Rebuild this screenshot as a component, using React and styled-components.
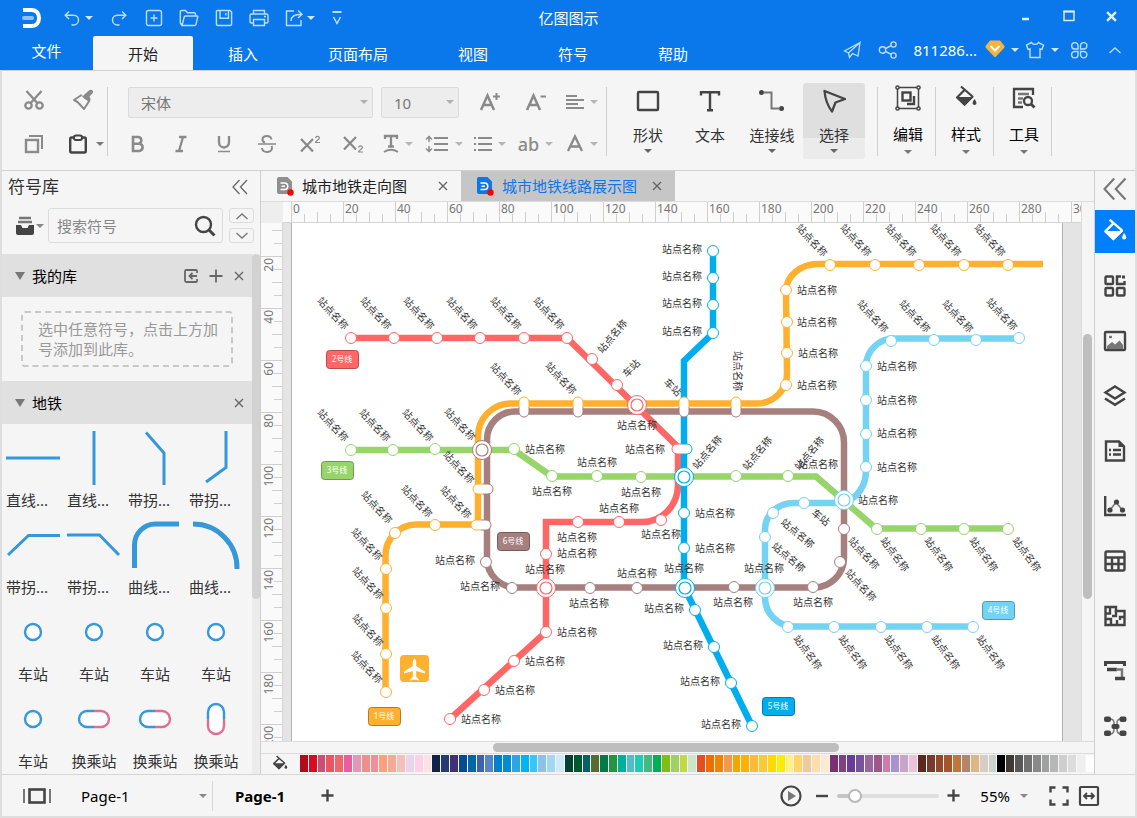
import React, { useState } from "react";
import styled, { createGlobalStyle, css } from "styled-components";

const GlobalStyle = createGlobalStyle`
  * {
    box-sizing: border-box;
  }
  body {
    margin: 0;
    font-family: "Noto Sans", "Noto Sans CJK SC", sans-serif;
    font-size: 15px;
    line-height: 20px;
    color: #333;
    background: #f5f5f5;
  }
  button,
  input,
  select {
    font: inherit;
    color: inherit;
    margin: 0;
    padding: 0;
    border: 0;
    background: none;
    outline: none;
  }
`;

/* ---------- data ---------- */

const menuTabs = ["开始", "插入", "页面布局", "视图", "符号", "帮助"];

const palette = (
  "b60a1a d90b22 ca4f77 ea5465 ec686e e85f9f e299b7 ef8f8b f08f9b ffa07a f1ab96 f6bfbc e9d5e9 ffd1e6 ffe0e5 " +
  "11214d 233b72 412f78 044b91 0067a6 3e62ad 5686c4 007fcd 008dd0 2ca5e2 00b4f0 33c8fb 8cc2ea a0d8ef cdeaf7 " +
  "004233 00592e 006463 576c31 007b47 1f963f 00af9d 52bec3 1bcdb4 47b980 00b054 7fbd11 a2cf63 c0d945 cde6c9 " +
  "e34f21 ed6d00 f08300 f2994f f2a600 ffb100 ffb937 fcca2f ffd900 ffec00 fff280 ffd56b eccd9a ffddb0 ffe9d0 " +
  "7a3173 833f85 673d98 75549b 9a669f 9d5788 cd7cb0 aa92d1 c8a5c8 edc1dc " +
  "5b2a1d 763a2e 94492a a85429 c1763e b68469 dfb583 d8ccc5 c9d3cb " +
  "000000 3e3837 595757 727171 898989 9fa0a0 b5b6b6 cdcecd dcdcdc efefef ffffff"
).split(" ");

const RED = "#ff6666";
const ORANGE = "#ffb02f";
const BROWN = "#a67f7f";
const GREEN = "#97d56a";
const BLUE = "#00aeef";
const SKY = "#74d3f3";

const metroLines = [
  { color: ORANGE, d: "M385.5 692V556A31 31 0 0 1 416 524.5H478V437A33 33 0 0 1 511 403.5H757A30 30 0 0 0 787 373L786 291A32 27 0 0 1 818 264H1043" },
  { color: BROWN, d: "M487 440A28 28 0 0 1 515 411.5H813A31 31 0 0 1 844 443V558A30 30 0 0 1 814 587.5H516A29 29 0 0 1 487 558Z" },
  { color: GREEN, d: "M350 450H514L552 476.5H816L876 528.5H1008" },
  { color: SKY, d: "M1019 338.5H894A28 28 0 0 0 866 366V470C866 486 858 497 844 503H794A29 26 0 0 0 765 529V598A29 29 0 0 0 794 626.5H972" },
  { color: RED, d: "M350 338H567L678 447V485A36 37 0 0 1 642 522H546V632L450 719" },
  { color: BLUE, d: "M713 250V333L684 361V587L752 726" },
];

const stations = [
  [RED, [[351, 338], [394, 338], [437, 338], [480, 338], [524, 338], [567, 338], [592, 359], [617, 385], [578, 522], [619, 522], [661, 520], [546, 554], [546, 632], [514, 661], [484, 690], [450, 719]]],
  [ORANGE, [[386, 692], [386, 654], [386, 608], [386, 569], [395, 533], [435, 525], [786, 385], [787, 353], [787, 322], [786, 290], [830, 265], [875, 265], [919, 265], [964, 265], [1008, 265]]],
  [BROWN, [[486, 562], [512, 588], [590, 588], [637, 588], [734, 587], [813, 587], [840, 562], [844, 529]]],
  [GREEN, [[351, 450], [393, 450], [435, 449], [514, 449], [552, 476], [597, 476], [641, 477], [736, 476], [788, 476], [877, 529], [921, 529], [964, 529], [1008, 529]]],
  [BLUE, [[713, 251], [713, 278], [713, 305], [713, 333], [684, 513], [684, 548], [695, 610], [714, 647], [731, 683], [752, 726]]],
  [SKY, [[891, 341], [934, 340], [976, 340], [1019, 338], [866, 366], [866, 400], [866, 434], [866, 467], [804, 503], [773, 513], [765, 537], [788, 627], [834, 627], [881, 627], [927, 627], [973, 627]]],
];

const interchanges = [
  [RED, 637, 405],
  [RED, 546, 588],
  [BROWN, 482, 450],
  [BLUE, 684, 477],
  [BLUE, 685, 588],
  [SKY, 844, 500],
  [SKY, 765, 588],
];

const capsules = [
  [524, 407, ORANGE, BROWN, true],
  [578, 407, ORANGE, BROWN, true],
  [684, 407, ORANGE, BROWN, true],
  [736, 407, ORANGE, BROWN, true],
  [483, 489, ORANGE, BROWN, false],
  [481, 525, ORANGE, BROWN, false],
  [682, 449, RED, BLUE, false],
];

// angle -> centres of the station names
const stationNames = [
  [0, [
    [682, 249], [682, 276], [682, 303], [682, 331], [817, 290], [817, 322], [818, 353], [817, 385],
    [637, 425], [645, 449], [597, 462], [818, 464], [897, 366], [897, 400], [897, 433], [897, 467],
    [878, 500], [545, 449], [552, 491], [455, 560], [480, 586], [577, 537], [577, 553], [545, 569],
    [577, 632], [545, 661], [515, 690], [481, 719], [641, 492], [619, 508], [661, 534], [637, 573],
    [684, 568], [764, 568], [589, 603], [733, 602], [813, 602], [664, 608], [683, 645], [700, 681],
    [721, 724], [715, 513], [715, 548],
  ]],
  [47, [
    [333, 313], [376, 313], [419, 313], [462, 313], [506, 313], [549, 313],
    [333, 425], [375, 425], [418, 425], [460, 424], [506, 379], [561, 378],
    [459, 467], [377, 507], [417, 501], [456, 502], [367, 544], [368, 583], [368, 630], [367, 667],
    [812, 240], [856, 240], [901, 240], [946, 240], [990, 240],
    [873, 316], [915, 316], [958, 316], [1002, 314], [864, 553], [861, 585],
  ]],
  [40, [[798, 533], [789, 557]]],
  [53, [[895, 554], [939, 554], [984, 554], [1027, 554], [808, 652], [853, 652], [899, 652], [946, 652], [991, 652]]],
  [-50, [[612, 336], [707, 452], [757, 453], [809, 453]]],
  [90, [[738, 371]]],
];

const shortNames = [[673, 387, 45], [631, 368, -45], [821, 517, 40]];

const badges = [
  ["2号线", 326, 350, RED, "#b94c4c"],
  ["3号线", 321, 461, GREEN, "#6d9b4c"],
  ["1号线", 368, 707, ORANGE, "#b57c20"],
  ["6号线", 497, 532, BROWN, "#785a5a"],
  ["5号线", 762, 697, BLUE, "#007dac"],
  ["4号线", 982, 601, SKY, "#5298b0"],
];

/* ---------- icons ---------- */

const Svg = styled.svg`
  display: block;
  flex: none;
  fill: none;
  stroke: currentColor;
  stroke-width: ${(p) => p.$line || 2};
  overflow: visible;
`;

const Icon = ({ w = 20, h = 20, line, children }) => (
  <Svg width={w} height={h} viewBox={`0 0 ${w} ${h}`} $line={line} aria-hidden="true">
    {children}
  </Svg>
);

const Solid = (props) => <path fill="currentColor" stroke="none" {...props} />;

const Logo = () => (
  <Icon w={20} h={20} line={4}>
    <path d="M1 2H9.5C14.5 2 17 5.5 17 10S14.5 18 9.5 18H1" stroke="#fff" />
    <path d="M2 10H10" stroke="#8fc3f8" strokeLinecap="round" />
  </Icon>
);

const UndoIcon = () => (
  <Icon w={16} h={16} line={1.4}>
    <path d="M5 1.5L1.2 5.2L5 9M1.5 5.2H9.5C12.5 5.2 14.5 7.3 14.5 10S12.5 15 9.5 15H7.5" />
  </Icon>
);
const RedoIcon = () => (
  <Icon w={16} h={16} line={1.4}>
    <path d="M11 1.5L14.8 5.2L11 9M14.5 5.2H6.5C3.5 5.2 1.5 7.3 1.5 10S3.5 15 6.5 15H8.5" />
  </Icon>
);
const NewIcon = () => (
  <Icon w={18} h={18} line={1.4}>
    <rect x="1.5" y="1.5" width="15" height="15" rx="2" />
    <path d="M9 5.5V12.5M5.5 9H12.5" />
  </Icon>
);
const OpenIcon = () => (
  <Icon w={20} h={18} line={1.4}>
    <path d="M3 16.5L1.3 14V2.5Q1.3 1.5 2.5 1.5H6.5L8.5 3.8H15Q16.5 3.8 16.5 5V7M3 16.5L5.2 8Q5.5 7 6.5 7H18Q19 7 18.7 8L17 15.3Q16.7 16.5 15.5 16.5Z" />
  </Icon>
);
const SaveIcon = () => (
  <Icon w={18} h={18} line={1.4}>
    <path d="M2.5 1.5H15L16.6 3V15Q16.6 16.5 15 16.5H3Q1.4 16.5 1.4 15V2.5Q1.4 1.5 2.5 1.5ZM5 1.5V9.3H13.5V1.5M10.8 4V6.5" />
  </Icon>
);
const PrintIcon = () => (
  <Icon w={20} h={18} line={1.4}>
    <path d="M4.5 5V1.5H15.5V5M4.5 14H2.5Q1 14 1 12.5V6.5Q1 5 2.5 5H17.5Q19 5 19 6.5V12.5Q19 14 17.5 14H15.5M4.5 10.5H15.5V16.5H4.5ZM15 7.5H17" />
  </Icon>
);
const ExportIcon = () => (
  <Icon w={18} h={18} line={1.4}>
    <path d="M9 2H1.5V16.5H16V11M6 12C6 7.5 9 5.3 16.5 5.3M13 1.5L17 5.3L13 9" />
  </Icon>
);
const CustomIcon = () => (
  <Icon w={12} h={16} line={1.5}>
    <path d="M1.500 2H10.5" strokeWidth="2" />
    <path d="M2.5 7L6 13.5L9.5 7" />
  </Icon>
);
const SendIcon = () => (
  <Icon w={18} h={18} line={1.3}>
    <path d="M17 1.5L1.5 10L5.5 12L17 1.5L15 15L9.5 12.5L6.5 16.5L5.5 12" />
  </Icon>
);
const ShareIcon = () => (
  <Icon w={20} h={20} line={1.4}>
    <circle cx="4.5" cy="10" r="3.2" />
    <circle cx="15.5" cy="4.5" r="2.6" />
    <circle cx="15.5" cy="15.5" r="2.6" />
    <path d="M7.5 8.5L13.2 5.7M7.5 11.5L13.2 14.3" />
  </Icon>
);
const VipIcon = () => (
  <Icon w={20} h={20} line={2}>
    <path d="M5 .5H15L19.5 6Q20 7 19 8L10.8 16.8Q10 17.5 9.2 16.8L1 8Q0 7 .5 6Z" fill="#f5b340" stroke="none" />
    <path d="M5.5 6L10 10.5L14.5 6" stroke="#fff" />
  </Icon>
);
const ShirtIcon = () => (
  <Icon w={20} h={18} line={1.4}>
    <path d="M6.5 1.5L1.5 4L3 8.5L5 8V16.5H15V8L17 8.5L18.5 4L13.5 1.5C12.5 4 7.5 4 6.5 1.5Z" />
  </Icon>
);
const CloverIcon = () => (
  <Icon w={18} h={18} line={1.4}>
    <path d="M8 8H4.500A3.200 3.200 0 1 1 8 4.500ZM10.500 8H13.500A3.200 3.200 0 1 0 10.500 4.500ZM8 10.500H4.500A3.200 3.200 0 1 0 8 13.500ZM10.500 10.500H13.500A3.200 3.200 0 1 1 10.500 13.500Z" />
  </Icon>
);

const CutIcon = () => (
  <Icon w={20} h={20} line={2.3}>
    <circle cx="4.5" cy="15.5" r="3.2" />
    <circle cx="15.5" cy="15.5" r="3.2" />
    <path d="M2.5 1L13.3 13M17.5 1L6.7 13" />
  </Icon>
);
const BrushIcon = () => (
  <Icon w={22} h={22}>
    <Solid d="M8.5 5L11 7L13.5 4.5L17.5 1Q19.5 0 21 2Q21.5 3.5 20 5L17.5 7.5L18.5 10L18 12.5Q12.5 11.5 8.5 5Z" />
    <path d="M9.5 6L2 11Q6 13 7 14.5L12 20L17.5 11.5" strokeLinejoin="round" />
  </Icon>
);
const CopyIcon = () => (
  <Icon w={20} h={20}>
    <rect x="2" y="6" width="12" height="12" strokeWidth="2.400" />
    <path d="M5 2H18V15" />
  </Icon>
);
const PasteIcon = () => (
  <Icon w={20} h={20} line={2.4}>
    <path d="M6 3.5H3.5Q2.2 3.5 2.2 5V17Q2.2 18.5 3.5 18.5H16.5Q17.8 18.5 17.8 17V5Q17.8 3.5 16.5 3.5H14" />
    <rect x="6" y="1.500" width="8" height="4.500" rx="2" strokeWidth="2" />
  </Icon>
);
const BoldIcon = () => (
  <Icon w={16} h={18} line={2.6}>
    <path d="M3 2H8.5A3.4 3.4 0 0 1 8.5 8.7H3ZM3 8.7H9.5A3.7 3.7 0 0 1 9.5 16H3Z" />
  </Icon>
);
const ItalicIcon = () => (
  <Icon w={14} h={18}>
    <path d="M5 2H12.5M1.5 16H9M9 2L5 16" strokeWidth="2.3" />
  </Icon>
);
const UnderlineIcon = () => (
  <Icon w={16} h={18}>
    <path d="M3 1V7.5A5 5 0 0 0 13 7.5V1" strokeWidth="2.3" />
    <path d="M2 16.5H14" strokeWidth="1.5" />
  </Icon>
);
const StrikeIcon = () => (
  <Icon w={20} h={20}>
    <path d="M14.5 5.5C14 3 12.5 2 10 2S5.5 3.2 5.5 5.5C5.5 7 6.2 8 8 8.5M14.5 12Q15 13 15 14C15 16.5 12.5 18 10 18S5.3 16.5 5 14" />
    <path d="M1 10H19" strokeWidth="1.5" />
  </Icon>
);
const SuperIcon = () => (
  <Icon w={22} h={18}>
    <path d="M2 4L14 16.5M14 4L2 16.5" strokeWidth="2.3" />
    <path d="M16.5 3A2 2 0 0 1 20.4 3C20.4 4.5 16.5 6 16.5 7.5H21" strokeWidth="1.2" />
  </Icon>
);
const SubIcon = () => (
  <Icon w={22} h={18}>
    <path d="M2 2L14 14.5M14 2L2 14.5" strokeWidth="2.3" />
    <path d="M16.5 12.5A2 2 0 0 1 20.4 12.5C20.4 14 16.5 15.5 16.5 17H21" strokeWidth="1.2" />
  </Icon>
);
const GrowIcon = () => (
  <Icon w={22} h={20} line={2.5}>
    <path d="M2 18L8.5 3.5L15 18M4.5 13H12.5" />
    <path d="M17.5 1V8M14 4.5H21" strokeWidth="2" />
  </Icon>
);
const ShrinkIcon = () => (
  <Icon w={22} h={20} line={2.5}>
    <path d="M2 18L8.5 3.5L15 18M4.5 13H12.5" />
    <path d="M15.5 4.5H21" strokeWidth="2" />
  </Icon>
);
const AlignIcon = () => (
  <Icon w={18} h={16}>
    <path d="M0 2H11M0 6H18M0 10H12M0 14H18" />
  </Icon>
);
const TextFxIcon = () => (
  <Icon w={16} h={20}>
    <path d="M2 5V2H14V5M8 2V12.5M5 12.5H11" strokeWidth="2.3" />
    <path d="M1 18Q8 13.5 15 18" strokeWidth="1.8" />
  </Icon>
);
const SpacingIcon = () => (
  <Icon w={24} h={18}>
    <path d="M9 3H23M9 9H23M9 15H23" strokeWidth="2.2" />
    <path d="M4 1.5V7M1 4.5L4 1.5L7 4.5M4 11V16.5M1 13.5L4 16.5L7 13.5" strokeWidth="1.5" />
  </Icon>
);
const BulletsIcon = () => (
  <Icon w={18} h={18}>
    <path d="M4 3H18M4 9H18M4 15H18M0 3H2M0 9H2M0 15H2" strokeWidth="2.2" />
  </Icon>
);
const FontColorIcon = () => (
  <Icon w={18} h={18} line={2.3}>
    <path d="M2 16L9 1.5L16 16M4.5 11.5H13.5" />
  </Icon>
);

const ShapeIcon = () => (
  <Icon w={26} h={26} line={2.4}>
    <rect x="3" y="4" width="20" height="18" rx="1" />
  </Icon>
);
const TextIcon = () => (
  <Icon w={26} h={26} line={2.4}>
    <path d="M4 7.5V4.2H22V7.5M13 4V22M10 22.2H16" />
  </Icon>
);
const ConnectorIcon = () => (
  <Icon w={26} h={26}>
    <circle cx="2.5" cy="4.5" r="2.5" fill="currentColor" stroke="none" />
    <circle cx="22.5" cy="20.5" r="2.5" fill="currentColor" stroke="none" />
    <path d="M5 4.5H12.5V20.5H21" stroke="#777" />
  </Icon>
);
const SelectIcon = () => (
  <Icon w={26} h={26} line={2.3}>
    <path d="M3.5 3L24 11L14.5 14.5L11 23.5Q4.5 15 3.5 3Z" strokeLinejoin="round" />
  </Icon>
);
const EditIcon = () => (
  <Icon w={26} h={26} line={1.5}>
    <rect x="2.5" y="2.5" width="21" height="21" />
    <rect x="7.5" y="7.5" width="8" height="8" strokeWidth="2.4" />
    <path d="M19 11V19H12" strokeWidth="2.4" />
    <g fill="#f5f5f5">
      <circle cx="2.5" cy="2.5" r="1.6" />
      <circle cx="23.5" cy="2.5" r="1.6" />
      <circle cx="2.5" cy="23.5" r="1.6" />
      <circle cx="23.5" cy="23.5" r="1.6" />
    </g>
  </Icon>
);
const BucketIcon = ({ size = 26 }) => (
  <Svg width={size} height={size} viewBox="0 0 26 26" $line={2.2} aria-hidden="true">
    <path d="M8 1.5L19.5 11.5L11.5 19.5L4 12.5L11.5 5" strokeLinejoin="round" />
    <Solid d="M3 12H20.5L11.5 21Z" />
    <Solid d="M21.5 14Q23.5 16.5 23.5 18A2 2 0 0 1 19.5 18Q19.5 16.5 21.5 14Z" />
  </Svg>
);
const ToolsIcon = () => (
  <Icon w={26} h={26} line={2.3}>
    <path d="M22 10V4H3V22H12" />
    <path d="M7 9H18M7 13.5H12M7 17.5H11" stroke="#777" />
    <circle cx="17" cy="16" r="4" />
    <path d="M20 19L23.5 22.5" strokeWidth="2.8" />
  </Icon>
);

const DoubleChevron = ({ w = 16, h = 16, line = 1.5 }) => (
  <Svg width={w} height={h} viewBox="0 0 16 16" $line={line} aria-hidden="true">
    <path d="M7.5 1L1 8L7.5 15M15 1L8.5 8L15 15" />
  </Svg>
);
const CloseIcon = ({ size = 10, line = 1.4 }) => (
  <Svg width={size} height={size} viewBox="0 0 10 10" $line={line} aria-hidden="true">
    <path d="M1 1L9 9M9 1L1 9" />
  </Svg>
);
const PlusIcon = ({ size = 14, line = 2 }) => (
  <Svg width={size} height={size} viewBox="0 0 14 14" $line={line} aria-hidden="true">
    <path d="M7 .5V13.5M.5 7H13.5" />
  </Svg>
);
const ChevronIcon = ({ down }) => (
  <Icon w={14} h={8} line={1.3}>
    <path d={down ? "M1.500 1L7 6L12.500 1" : "M1.500 7L7 2L12.500 7"} />
  </Icon>
);
const LibraryIcon = () => (
  <Icon w={18} h={20}>
    <path d="M3 2H15M2 6H16" stroke="#777" strokeWidth="2.400" />
    <Solid d="M0 9H5L6.500 12H11.500L13 9H18V17Q18 19 16 19H2Q0 19 0 17Z" />
  </Icon>
);
const SearchIcon = () => (
  <Icon w={22} h={22} line={2.4}>
    <circle cx="9.5" cy="9.5" r="7.500" />
    <path d="M15 15L20.5 20.5" strokeWidth="3" />
  </Icon>
);
const ImportIcon = () => (
  <Icon w={14} h={14} line={1.8}>
    <path d="M13 4V2Q13 1 12 1H2.5Q1 1 1 2.5V11.5Q1 13 2.5 13H12Q13 13 13 12V10" />
    <path d="M13 7H6M8.5 4L5.5 7L8.5 10" />
  </Icon>
);
const DocIcon = ({ color }) => (
  <Icon w={18} h={20}>
    <path d="M2 1H10.5L15 5.5V16Q15 18 13 18H2Q0 18 0 16V3Q0 1 2 1Z" fill={color} stroke="none" />
    <path d="M3.5 7H7.5A3 3 0 0 1 7.5 13.5H3.5M4.5 10.2H8" stroke="#fff" strokeWidth="1.5" />
    <circle cx="13.500" cy="16.5" r="3.2" fill="#f00" stroke="none" />
  </Icon>
);

const PageFrameIcon = () => (
  <Icon w={28} h={16}>
    <path d="M1 1V15M27 1V15" stroke="#777" />
    <rect x="6.5" y="1.5" width="15" height="13" strokeWidth="2.6" />
  </Icon>
);
const PlayIcon = () => (
  <Icon w={22} h={22} line={2.200}>
    <circle cx="11" cy="11" r="9.500" />
    <path d="M8 6V16L16 11Z" fill="#777" stroke="none" />
  </Icon>
);
const MinusIcon = () => (
  <Icon w={14} h={14} line={2.4}>
    <path d="M1 7H13" />
  </Icon>
);
const FullIcon = () => (
  <Icon w={20} h={20} line={2.4}>
    <path d="M1.5 6.5V1.5H6.5M13.5 1.5H18.5V6.5M18.5 13.5V18.5H13.5M6.5 18.5H1.5V13.5" />
  </Icon>
);
const FitIcon = () => (
  <Icon w={20} h={20} line={2.2}>
    <rect x="1" y="1" width="18" height="18" rx="1" />
    <path d="M5 10H15M8 7L5 10L8 13M12 7L15 10L12 13" strokeWidth="1.8" />
  </Icon>
);

/* side bar icons share a 24px box */
const sideIcons = [
  ["布局", <g key="i"><rect x="2.5" y="2.5" width="7.5" height="7.5" rx="1" /><path d="M18 2.500H14V10H21.500V7" /><path d="M20.500 1.500V4.500" strokeWidth="3" /><rect x="2.5" y="14" width="7.5" height="7.5" rx="1" /><rect x="14" y="14" width="7.5" height="7.5" rx="1" /></g>],
  ["图片", <g key="i"><rect x="2" y="3" width="20" height="18" rx="1" /><path d="M4 20V17L9 13L12 15.5L16.5 11.5L20 16V20Z" fill="#777" stroke="none" /><path d="M6 8H9" stroke="#777" /></g>],
  ["图层", <g key="i"><path d="M12 2.5L21.5 8.5L12 14.5L2.5 8.5Z" /><path d="M2 14.5L12 20.8L22 14.5" strokeWidth="2.6" /></g>],
  ["页面", <g key="i"><path d="M3 2.5H16L21 7.5V21.5H3Z" /><path d="M6 11H8M10 11H18M6 15.5H8M10 15.5H18" /><path d="M15.5 2V8H21.5Z" fill="currentColor" stroke="none" /></g>],
  ["图表", <g key="i"><path d="M2.2 2V21H23" /><path d="M6.5 16.5L13 8.5L19.5 16" stroke="#777" strokeWidth="1.5" /><g fill="currentColor" stroke="none"><circle cx="7" cy="16" r="2.6" /><circle cx="13.5" cy="8" r="2.6" /><circle cx="19.5" cy="16" r="2.6" /></g></g>],
  ["表格", <g key="i"><rect x="2.5" y="2.5" width="19" height="19" rx="1.5" /><path d="M2 8.5H22M2 15H22M9 9V21M15.5 9V21" /></g>],
  ["平面图", <g key="i"><path d="M2.5 3H13V7H21.5V21H2.5Z" /><path d="M3 9.500H7V3M3 15H8V21M13 6V12H9M14 21V16M21 13H17V16" /></g>],
  ["流程", <g key="i"><path d="M2.5 7V3.5H21.5V7" strokeWidth="3" /><path d="M4 10.5H14" strokeWidth="3.5" /><path d="M13 10.5H19V18" stroke="#777" /><path d="M12 19.5H22" strokeWidth="3.5" /></g>],
  ["思维导图", <g key="i"><path d="M7 5Q11 5 11 9V15Q11 20 7 20M18 5Q14 5 14 9V15Q14 20 18 20" stroke="#777" strokeWidth="1.5" /><g fill="currentColor" stroke="none"><rect x="1" y="2.500" width="7" height="5.500" rx="2" /><rect x="1" y="16.500" width="7" height="5.500" rx="2" /><rect x="16.5" y="2.500" width="7" height="5.500" rx="2" /><rect x="16.5" y="16.500" width="7" height="5.500" rx="2" /><rect x="8.5" y="10" width="8" height="5" rx="2" /></g></g>],
];

/* symbols of the metro library, each in a 54px box */
const Ring = () => <circle cx="27" cy="27" r="8" fill="#fff" strokeWidth="2.4" />;
const Pill = ({ vertical }) => (
  <g transform={vertical ? "rotate(90 27 27)" : undefined} fill="#fff" strokeWidth="2.4">
    <path d="M27 19H20A8 8 0 0 0 20 35H27" />
    <path d="M27 19H34A8 8 0 0 1 34 35H27" stroke="#df6e94" />
  </g>
);
const symbols = [
  ["直线...", <path key="s" d="M0 27H54" />],
  ["直线...", <path key="s" d="M27 0V54" />],
  ["带拐...", <path key="s" d="M18 1.5L36 22V54" />],
  ["带拐...", <path key="s" d="M37 0V36.5L17 51" />],
  ["带拐...", <path key="s" d="M2 37L22.5 17.5H54" />],
  ["带拐...", <path key="s" d="M0 17H32.5L52 37" />],
  ["曲线...", <path key="s" d="M6.5 50V27A21 21 0 0 1 28 6H51" strokeWidth="5" />],
  ["曲线...", <path key="s" d="M4 6A44 44 0 0 1 48 51" strokeWidth="5" />],
  ["车站", <Ring key="s" />],
  ["车站", <Ring key="s" />],
  ["车站", <Ring key="s" />],
  ["车站", <Ring key="s" />],
  ["车站", <Ring key="s" />],
  ["换乘站", <Pill key="s" />],
  ["换乘站", <Pill key="s" />],
  ["换乘站", <Pill key="s" vertical />],
];

/* ---------- drawing ---------- */

const Drawing = () => (
  <MapSvg viewBox="292 223 770 518" role="img" aria-label="城市地铁线路展示图">
    {metroLines.map((l) => (
      <path key={l.color} d={l.d} fill="none" stroke={l.color} strokeWidth="6.5" />
    ))}
    {stations.map(([color, points]) =>
      points.map(([x, y]) => (
        <circle key={`${x}-${y}`} cx={x} cy={y} r="5.5" fill="#fff" stroke={color} />
      ))
    )}
    {capsules.map(([x, y, a, b, vertical]) => (
      <g key={`${x}-${y}`} fill="#fff" transform={`translate(${x} ${y}) rotate(${vertical ? 90 : 0})`}>
        <path d="M0 -5H-5A5 5 0 0 0 -5 5H0" stroke={a} />
        <path d="M0 -5H5A5 5 0 0 1 5 5H0" stroke={b} />
      </g>
    ))}
    {interchanges.map(([color, x, y]) => (
      <g key={`${x}-${y}`} fill="#fff" stroke={color}>
        <circle cx={x} cy={y} r="9.5" />
        <circle cx={x} cy={y} r="6" strokeWidth="1.2" />
      </g>
    ))}
    {stationNames.map(([angle, points]) =>
      points.map(([x, y]) => (
        <StationText key={`${x}-${y}`} transform={`translate(${x} ${y}) rotate(${angle})`} y="4">
          站点名称
        </StationText>
      ))
    )}
    {shortNames.map(([x, y, angle]) => (
      <StationText key={x} transform={`translate(${x} ${y}) rotate(${angle})`} y="4">
        车站
      </StationText>
    ))}
    {badges.map(([name, x, y, fill, edge]) => (
      <g key={name}>
        <rect x={x + 0.5} y={y + 0.5} width="32" height="18" rx="3" fill={fill} stroke={edge} />
        <BadgeText x={x + 16} y={y + 12}>{name}</BadgeText>
      </g>
    ))}
    <rect x="400" y="655" width="29" height="27" rx="4" fill={ORANGE} />
    <path
      d="M414.5 658.5Q416.2 659.5 416.2 662V666L425 671.5V673.5L416.2 671V677L418.5 679V680.5L414.5 679.5L410.5 680.5V679L412.8 677V671L404 673.5V671.5L412.8 666V662Q412.8 659.5 414.5 658.5Z"
      fill="#fff"
    />
  </MapSvg>
);

/* ---------- page ---------- */

const Split = ({ label, children }) => (
  <ToolButton $split aria-label={label}>
    {children}
    <Caret $tone="#b5b5b5" />
  </ToolButton>
);

export default function App() {
  const [zoom, setZoom] = useState(12);
  const [tool, setTool] = useState("选择");

  return (
    <Shell>
      <GlobalStyle />
      <Header>
        <TitleRow>
          <QuickBar>
            <Logo />
            <QuickGroup>
              <QuickButton aria-label="撤销"><UndoIcon /></QuickButton>
              <CaretButton aria-label="撤销历史"><Caret $tone="#cfe4fb" /></CaretButton>
            </QuickGroup>
            <QuickButton aria-label="重做"><RedoIcon /></QuickButton>
            <QuickButton aria-label="新建"><NewIcon /></QuickButton>
            <QuickButton aria-label="打开"><OpenIcon /></QuickButton>
            <QuickButton aria-label="保存"><SaveIcon /></QuickButton>
            <QuickButton aria-label="打印"><PrintIcon /></QuickButton>
            <QuickGroup $flush>
              <QuickButton aria-label="导出"><ExportIcon /></QuickButton>
              <CaretButton aria-label="导出选项"><Caret $tone="#cfe4fb" /></CaretButton>
            </QuickGroup>
            <QuickButton $w={14} aria-label="自定义"><CustomIcon /></QuickButton>
          </QuickBar>
          <AppTitle>亿图图示</AppTitle>
          <WindowButtons>
            <WindowButton aria-label="最小化">
              <Icon w={12} h={12} line={2.5}><path d="M2 9H9" /></Icon>
            </WindowButton>
            <WindowButton aria-label="最大化">
              <Icon w={12} h={12} line={1.4}><rect x="1" y="1.5" width="10" height="9" /><path d="M.5 1.5H11.5" strokeWidth="2" /></Icon>
            </WindowButton>
            <WindowButton aria-label="关闭"><CloseIcon size={11} line={2.2} /></WindowButton>
          </WindowButtons>
        </TitleRow>
        <MenuRow>
          <FileTab>文件</FileTab>
          {menuTabs.map((name, i) => (
            <MenuTab key={name} $active={i === 0}>{name}</MenuTab>
          ))}
          <UserTools>
            <QuickButton $w={36} aria-label="发送"><SendIcon /></QuickButton>
            <QuickButton $w={36} aria-label="分享"><ShareIcon /></QuickButton>
            <UserName>811286...</UserName>
            <QuickButton $w={28} aria-label="会员"><VipIcon /></QuickButton>
            <CaretButton aria-label="账户"><Caret $tone="#cfe4fb" /></CaretButton>
            <QuickButton $w={28} aria-label="皮肤"><ShirtIcon /></QuickButton>
            <CaretButton aria-label="皮肤选项"><Caret $tone="#cfe4fb" /></CaretButton>
            <QuickButton $w={36} aria-label="应用"><CloverIcon /></QuickButton>
            <QuickButton $w={36} aria-label="收起"><ChevronIcon /></QuickButton>
          </UserTools>
        </MenuRow>
      </Header>

      <Frame>
        <Ribbon>
          <ClipGroup>
            <ToolButton aria-label="剪切"><CutIcon /></ToolButton>
            <ToolButton aria-label="格式刷"><BrushIcon /></ToolButton>
            <ToolButton aria-label="复制"><CopyIcon /></ToolButton>
            <ToolButton $dark aria-label="粘贴"><PasteIcon /><Caret $tone="#777" /></ToolButton>
          </ClipGroup>
          <Divider />
          <FontGroup>
            <ToolRow $indent>
              <SelectBox $w={245}>
                <select aria-label="字体"><option>宋体</option></select>
                <Caret $tone="#b0b0b0" />
              </SelectBox>
              <SelectBox $w={78}>
                <select aria-label="字号"><option>10</option></select>
                <Caret $tone="#b0b0b0" />
              </SelectBox>
              <ToolButton $split aria-label="增大字号"><GrowIcon /></ToolButton>
              <ToolButton $split aria-label="减小字号"><ShrinkIcon /></ToolButton>
              <Split label="对齐"><AlignIcon /></Split>
            </ToolRow>
            <ToolRow>
              <ToolButton aria-label="粗体"><BoldIcon /></ToolButton>
              <ToolButton aria-label="斜体"><ItalicIcon /></ToolButton>
              <ToolButton aria-label="下划线"><UnderlineIcon /></ToolButton>
              <ToolButton aria-label="删除线"><StrikeIcon /></ToolButton>
              <ToolButton aria-label="上标"><SuperIcon /></ToolButton>
              <ToolButton aria-label="下标"><SubIcon /></ToolButton>
              <Split label="文字效果"><TextFxIcon /></Split>
              <Split label="行距"><SpacingIcon /></Split>
              <Split label="项目符号"><BulletsIcon /></Split>
              <Split label="文字底色"><AbText>ab</AbText></Split>
              <Split label="文字颜色"><FontColorIcon /></Split>
            </ToolRow>
          </FontGroup>
          <Divider />
          <BigGroup>
            {[
              ["形状", <ShapeIcon key="i" />, true],
              ["文本", <TextIcon key="i" />, false],
              ["连接线", <ConnectorIcon key="i" />, true],
              ["选择", <SelectIcon key="i" />, true],
            ].map(([name, icon, caret]) => (
              <BigButton key={name} $active={tool === name} onClick={() => setTool(name)}>
                {icon}
                <span>{name}</span>
                {caret && <Caret $tone="#666" />}
              </BigButton>
            ))}
          </BigGroup>
          <Divider />
          <BigButton $black><EditIcon /><span>编辑</span><Caret $tone="#777" /></BigButton>
          <Divider />
          <BigButton $black><BucketIcon /><span>样式</span><Caret $tone="#777" /></BigButton>
          <Divider />
          <BigButton $black><ToolsIcon /><span>工具</span><Caret $tone="#777" /></BigButton>
          <Divider />
        </Ribbon>

        <Main>
          <Library>
            <LibraryTitle>
              <h2>符号库</h2>
              <PlainButton aria-label="收起符号库"><DoubleChevron line={1.3} /></PlainButton>
            </LibraryTitle>
            <SearchRow>
              <LibraryButton aria-label="符号库菜单"><LibraryIcon /><Caret $tone="#888" /></LibraryButton>
              <SearchBox>
                <input type="text" placeholder="搜索符号" aria-label="搜索符号" />
                <PlainButton $dark aria-label="搜索"><SearchIcon /></PlainButton>
              </SearchBox>
              <Stepper>
                <button aria-label="上一个"><ChevronIcon /></button>
                <button aria-label="下一个"><ChevronIcon down /></button>
              </Stepper>
            </SearchRow>
            <LibraryScroll>
              <LibraryList>
                <SectionHead>
                  <Caret $tone="#777" $big />
                  <h3>我的库</h3>
                  <PlainButton aria-label="导入"><ImportIcon /></PlainButton>
                  <PlainButton aria-label="添加"><PlusIcon line={1.8} /></PlainButton>
                  <PlainButton aria-label="关闭我的库"><CloseIcon /></PlainButton>
                </SectionHead>
                <EmptyWrap>
                  <EmptyHint>选中任意符号，点击上方加号添加到此库。</EmptyHint>
                </EmptyWrap>
                <SectionHead>
                  <Caret $tone="#777" $big />
                  <h3>地铁</h3>
                  <PlainButton aria-label="关闭地铁"><CloseIcon /></PlainButton>
                </SectionHead>
                <SymbolGrid>
                  {symbols.map(([name, art], i) => (
                    <SymbolButton key={i} $cut={name.endsWith("...")}>
                      <SymbolSvg viewBox="0 0 54 54" aria-hidden="true">{art}</SymbolSvg>
                      <span>{name}</span>
                    </SymbolButton>
                  ))}
                </SymbolGrid>
              </LibraryList>
              <LibraryTrack><LibraryThumb /></LibraryTrack>
            </LibraryScroll>
          </Library>

          <Workspace>
            <DocTabs>
              <DocTab>
                <DocIcon color="#8f8f8f" />
                <button>城市地铁走向图</button>
                <PlainButton aria-label="关闭城市地铁走向图"><CloseIcon /></PlainButton>
              </DocTab>
              <DocTab $active>
                <DocIcon color="#0a78ea" />
                <button>城市地铁线路展示图</button>
                <PlainButton aria-label="关闭城市地铁线路展示图"><CloseIcon /></PlainButton>
              </DocTab>
            </DocTabs>
            <CanvasGrid>
              <Corner />
              <TopRuler>
                {Array.from({ length: 16 }, (_, i) => <TopMark key={i}>{i * 20}</TopMark>)}
              </TopRuler>
              <SideRuler>
                {Array.from({ length: 10 }, (_, i) => (
                  <SideMark key={i}><span>{(i + 1) * 20}</span></SideMark>
                ))}
              </SideRuler>
              <Canvas>
                <Paper><Drawing /></Paper>
              </Canvas>
              <VTrack><VThumb /></VTrack>
            </CanvasGrid>
            <HTrack><HThumb /></HTrack>
            <PaletteRow>
              <PaletteLabel aria-label="填充"><BucketIcon size={18} /></PaletteLabel>
              {palette.map((c) => <Swatch key={c} $color={`#${c}`} aria-label={`#${c}`} />)}
            </PaletteRow>
          </Workspace>

          <SideBar>
            <SideCollapse aria-label="展开"><DoubleChevron w={24} h={24} line={1.4} /></SideCollapse>
            <SideActive aria-label="填充"><BucketIcon size={28} /></SideActive>
            {sideIcons.map(([name, art]) => (
              <SideButton key={name} aria-label={name}>
                <Icon w={24} h={24} line={2.4}>{art}</Icon>
              </SideButton>
            ))}
          </SideBar>
        </Main>

        <StatusBar>
          <PlainButton $dark aria-label="页面视图"><PageFrameIcon /></PlainButton>
          <PagePicker>
            <select aria-label="页面"><option>Page-1</option></select>
            <Caret $tone="#888" />
          </PagePicker>
          <PageTab>Page-1</PageTab>
          <PlainButton $dark aria-label="添加页面"><PlusIcon size={13} line={2.6} /></PlainButton>
          <ZoomTools>
            <PlainButton $dark aria-label="播放"><PlayIcon /></PlainButton>
            <PlainButton $dark aria-label="缩小"><MinusIcon /></PlainButton>
            <ZoomSlider
              type="range"
              aria-label="缩放"
              value={zoom}
              onChange={(e) => setZoom(Number(e.target.value))}
            />
            <PlainButton $dark aria-label="放大"><PlusIcon size={13} line={2.6} /></PlainButton>
            <ZoomValue>55%<Caret $tone="#888" /></ZoomValue>
            <PlainButton $dark aria-label="全屏"><FullIcon /></PlainButton>
            <PlainButton $dark aria-label="适应宽度"><FitIcon /></PlainButton>
          </ZoomTools>
        </StatusBar>
      </Frame>
    </Shell>
  );
}

/* ---------- styles ---------- */

const Shell = styled.div`
  display: flex;
  flex-direction: column;
  height: 100vh;
  overflow: hidden;
`;

const Caret = styled.i`
  flex: none;
  width: 0;
  height: 0;
  border: solid transparent;
  border-width: ${(p) => (p.$big ? "8px 5px 0" : "4px 4px 0")};
  border-top-color: ${(p) => p.$tone};
`;

const Header = styled.header`
  flex: none;
  background: #0a78ea;
  color: #fff;
`;

const TitleRow = styled.div`
  display: grid;
  grid-template-columns: 1fr auto 1fr;
  align-items: center;
  height: 36px;
`;

const QuickBar = styled.div`
  display: flex;
  align-items: center;
  gap: 13px;
  padding-left: 22px;
`;

const QuickGroup = styled.div`
  display: flex;
  margin-left: ${(p) => (p.$flush ? "0" : "6px")};
`;

const QuickButton = styled.button`
  display: flex;
  align-items: center;
  justify-content: center;
  width: ${(p) => p.$w || 22}px;
  height: 24px;
  color: #bfdcfa;
`;

const CaretButton = styled.button`
  display: flex;
  align-items: center;
  justify-content: center;
  width: 12px;
`;

const AppTitle = styled.h1`
  margin: 0;
  font-size: 15px;
  font-weight: 400;
`;

const WindowButtons = styled.div`
  display: flex;
  justify-content: flex-end;
  padding: 0 4px 4px 0;
`;

const WindowButton = styled.button`
  display: flex;
  align-items: center;
  justify-content: center;
  width: 43px;
  height: 28px;
  color: #e0eefd;
`;

const MenuRow = styled.nav`
  display: flex;
  height: 34px;
`;

const FileTab = styled.button`
  width: 93px;
  padding-bottom: 4px;
  color: #fff;
`;

const MenuTab = styled.button`
  padding: 2px 35px 0;
  border-radius: 2px 2px 0 0;
  color: ${(p) => (p.$active ? "#222" : "#fff")};
  background: ${(p) => (p.$active ? "#f5f5f5" : "transparent")};
`;

const UserTools = styled.div`
  display: flex;
  align-items: center;
  margin-left: auto;
  padding: 0 4px 6px 0;
`;

const UserName = styled.span`
  padding: 0 4px 0 7px;
`;

const Frame = styled.div`
  flex: 1;
  display: flex;
  flex-direction: column;
  min-height: 0;
  border: solid #dedede;
  border-width: 0 2px 2px;
  background: #f5f5f5;
`;

const Ribbon = styled.div`
  flex: none;
  display: flex;
  height: 101px;
  padding-top: 12px;
  border: solid #d0d0d0;
  border-width: 1px 0;
`;

const Divider = styled.div`
  flex: none;
  width: 1px;
  height: 69px;
  margin-top: 4px;
  background: #cfcfcf;
`;

const ToolButton = styled.button`
  display: flex;
  align-items: center;
  justify-content: center;
  gap: 6px;
  width: ${(p) => (p.$split ? 46 : 42)}px;
  color: ${(p) => (p.$dark ? "#444" : "#8a8a8a")};
`;

const ClipGroup = styled.div`
  display: grid;
  grid-template-columns: 50px 48px;
  grid-auto-rows: 30px;
  gap: 14px 0;
  padding: 2px 0 0 7px;
  ${ToolButton} {
    width: 100%;
  }
  ${ToolButton}:last-child {
    gap: 8px;
    padding-left: 6px;
  }
`;

const FontGroup = styled.div`
  display: flex;
  flex-direction: column;
  gap: 12px;
  padding: 4px 1px 0 9px;
`;

const ToolRow = styled.div`
  display: flex;
  column-gap: ${(p) => (p.$indent ? "0" : "1px")};
  height: 30px;
  padding-left: ${(p) => (p.$indent ? "11px" : "0")};
  ${(p) =>
    !p.$indent &&
    css`
      ${ToolButton}:nth-child(n + 7) {
        width: 45px;
      }
    `}
`;

const SelectBox = styled.div`
  position: relative;
  width: ${(p) => p.$w}px;
  height: 31px;
  margin-right: 8px;
  border: 1px solid #dbdbdf;
  border-radius: 2px;
  background: #ededed;
  color: #777;
  select {
    width: 100%;
    height: 100%;
    padding-left: 12px;
    appearance: none;
  }
  ${Caret} {
    position: absolute;
    right: 4px;
    top: 12px;
  }
`;

const AbText = styled.span`
  font-size: 18px;
  font-weight: 500;
`;

const BigGroup = styled.div`
  display: flex;
  padding: 0 12px 0 10px;
`;

const BigButton = styled.button`
  display: flex;
  flex-direction: column;
  align-items: center;
  width: ${(p) => (p.$black ? 57 : 62)}px;
  height: 76px;
  padding: ${(p) => (p.$black ? "2px 0 0 3px" : "5px 0 0")};
  border-radius: 3px;
  color: #444;
  background: ${(p) => (p.$active ? "linear-gradient(#dfdfdf 55px, #ebebeb 55px)" : "none")};
  span {
    margin: ${(p) => (p.$black ? "13px 0 6px" : "11px 0 4px")};
    color: ${(p) => (p.$black ? "#000" : "#333")};
  }
`;

const Main = styled.div`
  flex: 1;
  display: flex;
  min-height: 0;
`;

const PlainButton = styled.button`
  display: flex;
  align-items: center;
  justify-content: center;
  flex: none;
  color: ${(p) => (p.$dark ? "#444" : "#666")};
`;

const Library = styled.aside`
  flex: none;
  display: flex;
  flex-direction: column;
  width: 259px;
  border-right: 1px solid #cfcfcf;
`;

const LibraryTitle = styled.div`
  display: flex;
  align-items: center;
  justify-content: space-between;
  height: 32px;
  padding: 0 12px 0 6px;
  h2 {
    margin: 0;
    font-size: 17px;
    font-weight: 400;
  }
`;

const SearchRow = styled.div`
  display: flex;
  gap: 6px;
  height: 51px;
  padding: 5px 6px 11px 14px;
`;

const LibraryButton = styled.button`
  display: flex;
  align-items: center;
  gap: 2px;
  width: 26px;
  color: #444;
`;

const SearchBox = styled.div`
  flex: 1;
  display: flex;
  align-items: center;
  min-width: 0;
  padding: 0 6px 0 8px;
  border: 1px solid #dcdcdc;
  border-radius: 3px;
  input {
    flex: 1;
    min-width: 0;
  }
  input::placeholder {
    color: #888;
  }
`;

const Stepper = styled.div`
  display: flex;
  flex-direction: column;
  justify-content: space-between;
  button {
    display: flex;
    align-items: center;
    justify-content: center;
    width: 25px;
    height: 15px;
    border: 1px solid #dcdcdc;
    border-radius: 3px;
    color: #777;
  }
`;

const LibraryScroll = styled.div`
  flex: 1;
  display: flex;
  min-height: 0;
  overflow: hidden;
`;

const LibraryList = styled.div`
  flex: 1;
`;

const SectionHead = styled.div`
  display: flex;
  align-items: center;
  gap: 11px;
  height: 43px;
  padding: 0 8px 0 13px;
  background: #e0e0e0;
  h3 {
    flex: 1;
    margin: 0 0 0 -4px;
    font-size: 15px;
    font-weight: 400;
    color: #000;
  }
`;

const EmptyWrap = styled.div`
  padding: 14px 19px;
`;

const EmptyHint = styled.p`
  height: 56px;
  margin: 0;
  padding: 6px 10px 6px 15px;
  border: 2px dashed #c8c8c8;
  border-radius: 4px;
  color: #999;
`;

const SymbolGrid = styled.div`
  display: grid;
  grid-template-columns: repeat(4, 61px);
  grid-auto-rows: 87px;
`;

const SymbolButton = styled.button`
  display: flex;
  flex-direction: column;
  align-items: center;
  padding: 7px 3px 0 4px;
  span {
    width: 100%;
    margin-top: 5px;
    text-align: ${(p) => (p.$cut ? "left" : "center")};
  }
`;

const SymbolSvg = styled.svg`
  width: 54px;
  height: 54px;
  fill: none;
  stroke: #3498db;
  stroke-width: 3;
`;

const LibraryTrack = styled.div`
  width: 8px;
  background: #ececec;
`;

const LibraryThumb = styled.div`
  height: 345px;
  border-radius: 4px;
  background: #d2d2d2;
`;

const Workspace = styled.main`
  flex: 1;
  display: flex;
  flex-direction: column;
  min-width: 0;
`;

const DocTabs = styled.div`
  display: flex;
  height: 31px;
  border-bottom: 1px solid #dcdcdc;
`;

const DocTab = styled.div`
  display: flex;
  align-items: center;
  min-width: 200px;
  padding: 0 13px 0 16px;
  background: ${(p) => (p.$active ? "#c6c6c6" : "transparent")};
  button:first-of-type {
    margin: 0 15px 0 7px;
    color: ${(p) => (p.$active ? "#0a78ea" : "#222")};
  }
  ${PlainButton} {
    margin-left: auto;
  }
`;

const CanvasGrid = styled.div`
  flex: 1;
  display: grid;
  grid-template: 21px minmax(0, 1fr) / 22px minmax(0, 1fr) 13px;
  min-height: 0;
`;

const Corner = styled.div`
  background: #eee;
`;

const TopRuler = styled.div`
  display: flex;
  padding-left: 8px;
  overflow-x: clip;
  border-bottom: 1px solid #d5d5d5;
  background: #fafafa;
`;

const tick = "#cfcfcf";

const TopMark = styled.div`
  flex: none;
  width: 52px;
  padding-left: 1px;
  border-left: 1px solid ${tick};
  font-size: 12px;
  line-height: 14px;
  color: #777;
  background:
    linear-gradient(${tick}, ${tick}) 12px 100% / 1px 8px no-repeat,
    linear-gradient(${tick}, ${tick}) 25px 100% / 1px 10px no-repeat,
    linear-gradient(${tick}, ${tick}) 38px 100% / 1px 8px no-repeat;
`;

const SideRuler = styled.div`
  grid-column: 1;
  padding-top: 33px;
  overflow-y: clip;
  border-right: 1px solid #d5d5d5;
  background:
    linear-gradient(${tick}, ${tick}) 100% 7px / 10px 1px no-repeat,
    linear-gradient(${tick}, ${tick}) 100% 20px / 8px 1px no-repeat,
    #fafafa;
`;

const SideMark = styled.div`
  height: 52px;
  padding-top: 1px;
  border-top: 1px solid ${tick};
  font-size: 12px;
  line-height: 16px;
  color: #777;
  background:
    linear-gradient(${tick}, ${tick}) 100% 12px / 8px 1px no-repeat,
    linear-gradient(${tick}, ${tick}) 100% 25px / 10px 1px no-repeat,
    linear-gradient(${tick}, ${tick}) 100% 38px / 8px 1px no-repeat;
  span {
    display: block;
    width: 16px;
    writing-mode: vertical-rl;
    transform: rotate(180deg);
  }
`;

const Canvas = styled.div`
  display: flex;
  padding: 0 18px 0 8px;
  background: #e4e4e4;
`;

const Paper = styled.div`
  flex: 1;
  min-width: 0;
  border: solid #b3b3b3;
  border-width: 0 1px;
  background: #fff;
`;

const MapSvg = styled.svg`
  display: block;
  width: 100%;
  height: 100%;
`;

const mapText = css`
  text-anchor: middle;
  font-family: "Noto Sans", "Noto Sans CJK SC", sans-serif;
`;

const StationText = styled.text`
  ${mapText}
  font-size: 10px;
  fill: #333;
`;

const BadgeText = styled.text`
  ${mapText}
  font-size: 8px;
  fill: #fff;
`;

const VTrack = styled.div`
  grid-area: 1 / 3 / 3 / 4;
  display: flex;
  flex-direction: column;
  padding: 132px 2px 0 1px;
  border-left: 1px solid #dcdcdc;
`;

const VThumb = styled.div`
  flex: none;
  height: 265px;
  border-radius: 5px;
  background: #bebebe;
`;

const HTrack = styled.div`
  flex: none;
  height: 13px;
  padding: 1px 0;
  border: solid #dcdcdc;
  border-width: 1px 0;
`;

const HThumb = styled.div`
  width: 346px;
  height: 9px;
  margin-left: 232px;
  border-radius: 5px;
  background: #bebebe;
`;

const PaletteRow = styled.div`
  display: flex;
  gap: 1px;
  height: 20px;
  padding: 1px 0 2px;
`;

const PaletteLabel = styled.button`
  display: flex;
  align-items: center;
  justify-content: center;
  width: 38px;
  color: #444;
`;

const Swatch = styled.button`
  flex: 1;
  background: ${(p) => p.$color};
`;

const SideBar = styled.aside`
  flex: none;
  display: flex;
  flex-direction: column;
  width: 41px;
  overflow: hidden;
  border-left: 1px solid #cfcfcf;
`;

const SideButton = styled.button`
  display: flex;
  align-items: center;
  justify-content: center;
  flex: none;
  height: 55px;
  color: #444;
`;

const SideCollapse = styled(SideButton)`
  height: 39px;
  padding-bottom: 3px;
  color: #777;
`;

const SideActive = styled(SideButton)`
  height: 43px;
  margin-bottom: 5px;
  background: #007fff;
  color: #fff;
`;

const StatusBar = styled.footer`
  flex: none;
  display: flex;
  align-items: center;
  height: 42px;
  padding: 0 36px 0 21px;
  border-top: 1px solid #d5d5d5;
  color: #000;
`;

const PagePicker = styled.div`
  display: flex;
  align-items: center;
  width: 162px;
  height: 30px;
  padding: 0 5px 0 30px;
  border-right: 1px solid #d5d5d5;
  select {
    flex: 1;
    appearance: none;
  }
`;

const PageTab = styled.button`
  margin: 0 36px 0 22px;
  font-weight: 700;
`;

const ZoomTools = styled.div`
  display: flex;
  align-items: center;
  gap: 10px;
  margin-left: auto;
  ${PlainButton}:first-child {
    margin-right: 3px;
  }
`;

const ZoomSlider = styled.input`
  width: 102px;
  height: 4px;
  margin: 0 -2px;
  appearance: none;
  border-radius: 2px;
  background: linear-gradient(90deg, #c4c4c4 14px, #dedede 14px);
  &::-webkit-slider-thumb {
    appearance: none;
    width: 14px;
    height: 14px;
    border: 2px solid #b8b8b8;
    border-radius: 50%;
    background: #fff;
  }
`;

const ZoomValue = styled.button`
  display: flex;
  align-items: center;
  gap: 10px;
  margin: 0 11px 0 10px;
`;
